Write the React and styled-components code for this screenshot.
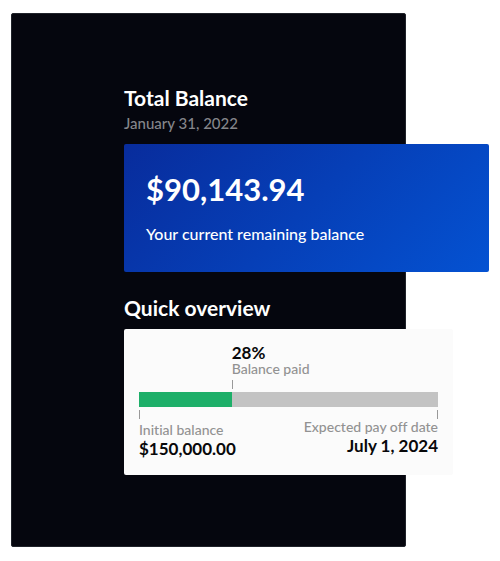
import styled, { createGlobalStyle } from "styled-components";

const GlobalStyle = createGlobalStyle`
  * {
    box-sizing: border-box;
  }

  body {
    margin: 0;
    background: #ffffff;
    font-family: Lato, "Open Sans", sans-serif;
    font-variant-ligatures: none;
  }

  h2,
  p {
    margin: 0;
  }
`;

const loan = {
  date: "January 31, 2022",
  remaining: "$90,143.94",
  initial: "$150,000.00",
  paid: "28%",
  payOffDate: "July 1, 2024",
};

export default function App() {
  return (
    <>
      <GlobalStyle />
      <Page>
        <Backdrop />
        <Content>
          <Title>Total Balance</Title>
          <DateText>{loan.date}</DateText>
          <BalanceCard>
            <Amount>{loan.remaining}</Amount>
            <AmountNote>Your current remaining balance</AmountNote>
          </BalanceCard>
          <Title>Quick overview</Title>
          <Overview />
        </Content>
      </Page>
    </>
  );
}

const Overview = () => (
  <OverviewCard>
    <PaidColumn>
      <Value>{loan.paid}</Value>
      <Label>Balance paid</Label>
      <Tick />
    </PaidColumn>
    <Track role="progressbar" aria-label="Balance paid" aria-valuetext={loan.paid}>
      <Fill />
    </Track>
    <Ends>
      <End>
        <Tick />
        <Label $top={3}>Initial balance</Label>
        <Value>{loan.initial}</Value>
      </End>
      <End $right>
        <Tick />
        <Label>Expected pay off date</Label>
        <Value>{loan.payOffDate}</Value>
      </End>
    </Ends>
  </OverviewCard>
);

const Page = styled.main`
  display: grid;
  grid-template-columns: 113px 1fr 83px;
  padding: 13px 11px 14px;
`;

const Backdrop = styled.div`
  grid-area: 1 / 1 / 2 / 3;
  background: #05060e;
  border: 1px solid #20232a;
  border-radius: 2px;
`;

const Content = styled.section`
  grid-area: 1 / 2 / 2 / 4;
  padding: 72px 0;
`;

const Title = styled.h2`
  font-size: 21px;
  font-weight: 700;
  line-height: 26px;
  color: #ffffff;
`;

const DateText = styled.p`
  margin-bottom: 8px;
  font-size: 15px;
  font-weight: 500;
  line-height: 25px;
  color: #84858a;
`;

const BalanceCard = styled.div`
  margin-bottom: 23px;
  padding: 25px 22px 28px;
  border-radius: 2px;
  background: linear-gradient(135deg, #082c9c, #0452d2);
  color: #ffffff;
`;

const Amount = styled.p`
  margin-bottom: 15px;
  font-size: 31px;
  font-weight: 700;
  line-height: 40px;
`;

const AmountNote = styled.p`
  font-size: 16px;
  font-weight: 500;
  line-height: 20px;
`;

const OverviewCard = styled.div`
  margin: 8px 36px 0 0;
  padding: 16px 15px 18px;
  border-radius: 2px;
  background: #fbfbfb;
`;

const PaidColumn = styled.div`
  display: flex;
  flex-direction: column;
  margin-left: 31%;
  padding-bottom: 3px;
`;

const Value = styled.p`
  font-size: 17px;
  font-weight: 700;
  line-height: 16px;
  color: #08080a;
`;

const Label = styled.p`
  margin: ${({ $top = 0 }) => $top}px 0 3px;
  font-size: 14px;
  font-weight: 500;
  line-height: 16px;
  color: #929292;
`;

const Tick = styled.span`
  width: 1px;
  height: 9px;
  background: #999999;
`;

const Track = styled.div`
  height: 15px;
  background: #c3c3c3;
`;

const Fill = styled.div`
  width: 31%;
  height: 100%;
  background: #1eaf69;
`;

const Ends = styled.div`
  display: flex;
  justify-content: space-between;
  padding-top: 3px;
`;

const End = styled.div`
  display: flex;
  flex-direction: column;
  align-items: ${({ $right }) => ($right ? "flex-end" : "flex-start")};
`;
